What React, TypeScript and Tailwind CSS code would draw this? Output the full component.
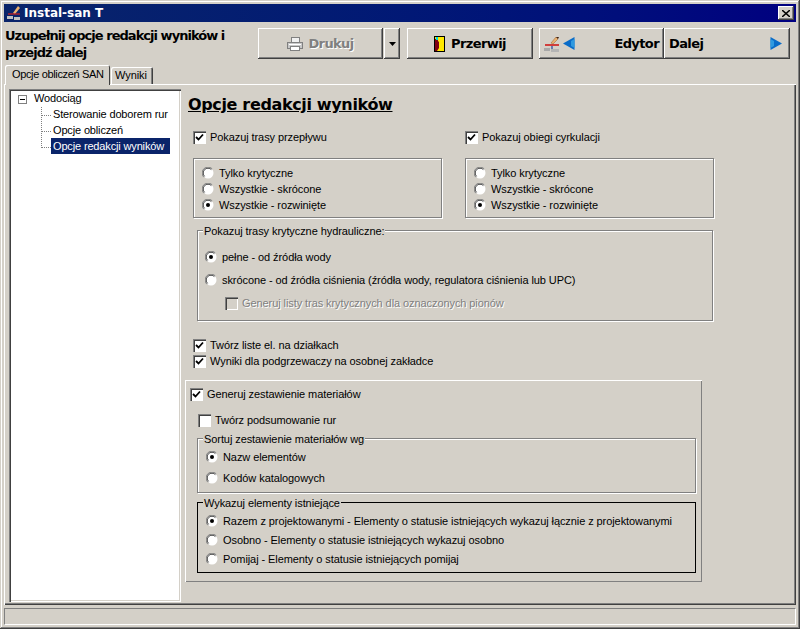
import React from 'react';

const raised = 'shadow-[inset_-1px_-1px_0_#404040,inset_1px_1px_0_#ffffff,inset_-2px_-2px_0_#808080]';
const btnText = "text-[13px] font-bold font-['DejaVu_Sans',sans-serif] tracking-[-0.6px]";

const Tick = () => (
  <svg width="9" height="9" viewBox="0 0 9 9" className="block">
    <path d="M1 4 L3.5 6.5 L8 1.5" fill="none" stroke="currentColor" strokeWidth="1.8" />
  </svg>
);

const Check: React.FC<{ checked?: boolean; disabled?: boolean; label: string; className?: string }> = ({ checked, disabled, label, className }) => (
  <div className={`flex items-center h-4 whitespace-nowrap ${className ?? ''}`}>
    <span className={`w-[13px] h-[13px] flex items-center justify-center shrink-0 shadow-[inset_1px_1px_0_#808080,inset_2px_2px_0_#404040,inset_-1px_-1px_0_#ffffff] ${disabled ? 'bg-[#d4d0c8]' : 'bg-white'}`}>
      {checked && <Tick />}
    </span>
    <span className={`ml-[4px] ${disabled ? 'text-[#808080] [text-shadow:1px_1px_0_#ffffff]' : 'text-black'}`}>{label}</span>
  </div>
);

const Radio: React.FC<{ checked?: boolean; label: string; className?: string }> = ({ checked, label, className }) => (
  <div className={`flex items-center h-4 whitespace-nowrap ${className ?? ''}`}>
    <svg width="12" height="12" viewBox="0 0 12 12" className="shrink-0 -ml-px mr-px">
      <circle cx="6" cy="6" r="5.5" fill="#ffffff" />
      <path d="M1.8 10.2 A5.5 5.5 0 0 1 10.2 1.8" fill="none" stroke="#808080" strokeWidth="1" />
      <path d="M2.6 9.4 A4.5 4.5 0 0 1 9.4 2.6" fill="none" stroke="#404040" strokeWidth="1" />
      {checked && <circle cx="6" cy="6" r="2" fill="#000000" />}
    </svg>
    <span className="ml-[4px] text-black">{label}</span>
  </div>
);

const Legend: React.FC<{ children: React.ReactNode }> = ({ children }) => (
  <span className="absolute left-[5px] -top-[7px] h-[14px] leading-[14px] whitespace-nowrap bg-[#d4d0c8] px-px">{children}</span>
);

const Arrow: React.FC<{ dir: 'left' | 'right' }> = ({ dir }) => (
  <svg width="12" height="13" viewBox="0 0 12 13" className="shrink-0">
    <path d={dir === 'left' ? 'M11.5 0 V13 L0 6.5 Z' : 'M0.5 0 V13 L12 6.5 Z'} fill="#0a6cc8" />
    <path d={dir === 'left' ? 'M11.5 2 V11 L8 9 V4 Z' : 'M0.5 2 V11 L4 9 V4 Z'} fill="#2f9ae0" />
  </svg>
);

const EditorIcon = () => (
  <svg width="16" height="16" viewBox="0 0 16 16" className="shrink-0">
    <path d="M7 7 L12 1 L14 3 L9 8 Z" fill="#eab070" stroke="#906030" strokeWidth="0.5" />
    <path d="M12 1 L14 3 L15 1 Z" fill="#402010" />
    <path d="M1 9 H15" stroke="#d01818" strokeWidth="1.6" />
    <path d="M8 10 V13" stroke="#2040a0" strokeWidth="1.2" />
    <rect x="0" y="12" width="6" height="3" fill="#a8a8a8" />
    <rect x="7" y="13" width="8" height="3" fill="#b4b4b4" />
  </svg>
);

export default function App() {
  return (
    <div className="w-[800px] h-[629px] flex flex-col bg-[#d4d0c8] p-[4px] overflow-hidden text-[11px] tracking-[-0.08px] leading-4 text-black font-['Liberation_Sans',sans-serif] shadow-[inset_-1px_-1px_0_#404040,inset_1px_1px_0_#d4d0c8,inset_-2px_-2px_0_#808080,inset_2px_2px_0_#ffffff]">
      {/* Title bar */}
      <div className="h-[18px] flex items-center shrink-0 bg-linear-to-r from-[#0a246a] to-[#000080] pl-[2px] pr-[2px]">
        <svg width="16" height="16" viewBox="0 0 16 16" className="shrink-0">
          <path d="M7 8 L12 1 L14 3 L9 9 Z" fill="#eab070" />
          <path d="M2 9 H14" stroke="#d02020" strokeWidth="1.2" />
          <rect x="1" y="11" width="6" height="3" fill="#c0c0c0" />
          <rect x="8" y="12" width="6" height="3" fill="#c0c0c0" />
        </svg>
        <span className="ml-[2px] font-bold text-white font-['DejaVu_Sans',sans-serif] text-[12px] tracking-normal">Instal-san T</span>
        <span className={`ml-auto w-[16px] h-[14px] bg-[#d4d0c8] flex items-center justify-center ${raised}`}>
          <svg width="8" height="7" viewBox="0 0 8 7"><path d="M0 0 L8 7 M8 0 L0 7" stroke="#000" strokeWidth="1.5" /></svg>
        </span>
      </div>

      {/* Header */}
      <div className="h-[43px] shrink-0 flex items-start pt-[6px]">
        <div className="w-[253px] ml-px mt-[-1px] font-bold text-[13px] leading-[17px] font-['DejaVu_Sans',sans-serif] tracking-[-0.97px]">
          Uzupełnij opcje redakcji wyników i przejdź dalej
        </div>
        <div className={`w-[125px] h-[31px] flex items-center justify-center gap-[5px] text-[#808080] [text-shadow:1px_1px_0_#ffffff] ${btnText} ${raised}`}>
          <svg width="16" height="14" viewBox="0 0 16 14" className="shrink-0">
            <rect x="4.5" y="0.5" width="8" height="5" fill="#f0f0f0" stroke="#808080" />
            <rect x="0.5" y="5.5" width="15" height="6" fill="#c8c8c8" stroke="#808080" />
            <path d="M2 7.5 H14" stroke="#ffffff" />
            <rect x="3.5" y="9.5" width="9" height="4" fill="#ffffff" stroke="#808080" />
          </svg>
          Drukuj
        </div>
        <div className={`w-[16px] h-[31px] ml-px flex items-center justify-center ${raised}`}>
          <svg width="7" height="4" viewBox="0 0 7 4"><path d="M0 0 H7 L3.5 4 Z" fill="#000" /></svg>
        </div>
        <div className={`w-[126px] h-[31px] ml-[7px] flex items-center justify-center gap-[6px] ${btnText} ${raised}`}>
          <svg width="11" height="16" viewBox="0 0 11 16" className="shrink-0">
            <rect width="11" height="16" fill="#000" />
            <rect x="1" y="1" width="9" height="14" fill="#ffe800" />
            <path d="M1 3 H4 V5 L5 6 V12 L3 15 H1 Z" fill="#800010" />
            <rect x="2" y="1" width="2" height="3" fill="#00d8e8" />
          </svg>
          Przerwij
        </div>
        <div className={`w-[125px] h-[31px] ml-[6px] flex items-center px-[5px] ${btnText} ${raised}`}>
          <EditorIcon />
          <span className="ml-[3px]"><Arrow dir="left" /></span>
          <span className="ml-auto">Edytor</span>
        </div>
        <div className={`w-[126px] h-[31px] flex items-center pl-[5px] pr-[8px] ${btnText} ${raised}`}>
          Dalej
          <span className="ml-auto"><Arrow dir="right" /></span>
        </div>
      </div>

      {/* Tabs */}
      <div className="h-[20px] shrink-0 flex items-end pl-px relative z-10">
        <div className="w-[105px] h-[20px] pl-[7px] pt-[1px] whitespace-nowrap tracking-[-0.35px] bg-[#d4d0c8] rounded-t-[2px] shadow-[inset_1px_1px_0_#ffffff,inset_-1px_0_0_#404040]">Opcje obliczeń SAN</div>
        <div className="w-[42px] h-[17px] ml-px mb-px pl-[4px] rounded-t-[2px] shadow-[inset_1px_1px_0_#ffffff,inset_-1px_0_0_#404040,inset_-2px_0_0_#808080]">Wyniki</div>
      </div>

      {/* Page */}
      <div className="flex-1 min-h-0 flex -mt-px pt-[5px] pl-[5px] shadow-[inset_1px_1px_0_#ffffff,inset_-1px_-1px_0_#404040,inset_-2px_-2px_0_#808080]">
        {/* Tree */}
        <div className="w-[172px] h-[513px] shrink-0 bg-white relative whitespace-nowrap tracking-[-0.15px] shadow-[inset_1px_1px_0_#808080,inset_2px_2px_0_#404040,inset_-1px_-1px_0_#ffffff,inset_-2px_-2px_0_#d4d0c8]">
          <div className="pt-[2px] pl-[25px] -mt-px">
            <div className="h-4">Wodociąg</div>
            <div className="pl-[19px]">
              <div className="h-4">Sterowanie doborem rur</div>
              <div className="h-4">Opcje obliczeń</div>
              <div className="h-4 w-[119px] -ml-[2px] pl-[2px] bg-[#0a246a] text-white">Opcje redakcji wyników</div>
            </div>
          </div>
          <span className="absolute left-[9px] top-[6px] w-[9px] h-[9px] bg-white border border-[#808080] flex items-center justify-center">
            <span className="w-[5px] h-px bg-black" />
          </span>
          <span className="absolute left-[32px] top-[18px] h-[41px] border-l border-dotted border-[#808080]" />
          <span className="absolute left-[32px] top-[26px] w-[10px] border-t border-dotted border-[#808080]" />
          <span className="absolute left-[32px] top-[42px] w-[10px] border-t border-dotted border-[#808080]" />
          <span className="absolute left-[32px] top-[58px] w-[10px] border-t border-dotted border-[#808080]" />
        </div>

        {/* Options */}
        <div className="flex-1 pl-[4px]">
          <div className="ml-[3px] mt-[5px] h-[22px] inline-block font-bold text-[16px] leading-[22px] underline font-['DejaVu_Sans',sans-serif] tracking-[-0.35px]">Opcje redakcji wyników</div>

          <div className="flex mt-[13px] pl-[8px]">
            <div className="w-[272px]">
              <Check checked label="Pokazuj trasy przepływu" />
              <div className="w-[249px] h-[60px] mt-[13px] pt-[6px] pl-[9px] border border-[#808080] shadow-[1px_1px_0_#ffffff,inset_1px_1px_0_#ffffff]">
                <Radio label="Tylko krytyczne" />
                <Radio label="Wszystkie - skrócone" />
                <Radio checked label="Wszystkie - rozwinięte" />
              </div>
            </div>
            <div>
              <Check checked label="Pokazuj obiegi cyrkulacji" />
              <div className="w-[249px] h-[60px] mt-[13px] pt-[6px] pl-[9px] border border-[#808080] shadow-[1px_1px_0_#ffffff,inset_1px_1px_0_#ffffff]">
                <Radio label="Tylko krytyczne" />
                <Radio label="Wszystkie - skrócone" />
                <Radio checked label="Wszystkie - rozwinięte" />
              </div>
            </div>
          </div>

          <div className="relative w-[516px] h-[91px] ml-[12px] mt-[12px] pt-[18px] pl-[8px] border border-[#808080] shadow-[1px_1px_0_#ffffff,inset_1px_1px_0_#ffffff]">
            <Legend>Pokazuj trasy krytyczne hydrauliczne:</Legend>
            <Radio checked label="pełne - od źródła wody" />
            <Radio className="mt-[7px]" label="skrócone - od źródła ciśnienia (źródła wody, regulatora ciśnienia lub UPC)" />
            <Check className="mt-[7px] ml-[19px]" disabled label="Generuj listy tras krytycznych dla oznaczonych pionów" />
          </div>

          <Check className="mt-[16px] ml-[8px]" checked label="Twórz liste el. na działkach" />
          <Check className="ml-[8px]" checked label="Wyniki dla podgrzewaczy na osobnej zakładce" />

          {/* Materials */}
          <div className="w-[517px] h-[202px] mt-[11px] pt-[6px] pl-[5px] shadow-[inset_1px_1px_0_#ffffff,inset_-1px_-1px_0_#808080]">
            <Check checked label="Generuj zestawienie materiałów" />
            <Check className="mt-[10px] ml-[8px]" label="Twórz podsumowanie rur" />
            <div className="relative w-[499px] h-[55px] ml-[7px] mt-[10px] pt-[10px] pl-[9px] border border-[#808080] shadow-[1px_1px_0_#ffffff,inset_1px_1px_0_#ffffff]">
              <Legend>Sortuj zestawienie materiałów wg</Legend>
              <Radio checked label="Nazw elementów" />
              <Radio className="mt-[5px]" label="Kodów katalogowych" />
            </div>
            <div className="relative w-[499px] h-[71px] ml-[7px] mt-[9px] pt-[10px] pl-[9px] border border-black">
              <Legend>Wykazuj elementy istniejące</Legend>
              <Radio checked label="Razem z projektowanymi - Elementy o statusie istniejących wykazuj łącznie z projektowanymi" />
              <Radio className="mt-[3px]" label="Osobno - Elementy o statusie istniejących wykazuj osobno" />
              <Radio className="mt-[3px]" label="Pomijaj - Elementy o statusie istniejących pomijaj" />
            </div>
          </div>
        </div>
      </div>

      {/* Status bar */}
      <div className="h-[20px] shrink-0 pt-[3px]">
        <div className="h-[17px] border border-t-[#808080] border-l-[#808080] border-r-white border-b-white" />
      </div>
    </div>
  );
}
